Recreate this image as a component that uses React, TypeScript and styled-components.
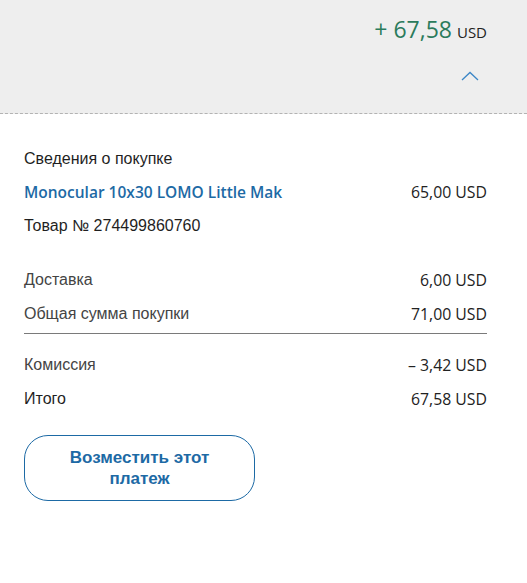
import React from "react"
import styled, { createGlobalStyle } from "styled-components"

const GlobalStyle = createGlobalStyle`
  html, body {
    margin: 0;
    padding: 0;
    background: #ffffff;
  }
`

const Page = styled.div`
  width: 527px;
  height: 583px;
  background: #ffffff;
  font-family: "Liberation Sans", Arial, sans-serif;
  color: #1f1f1f;
`

const Header = styled.div`
  height: 114px;
  background: #eeeeee;
  border-bottom: 1px dashed #b3b3b3;
  box-sizing: border-box;
  padding: 13px 40px 0 24px;
  display: flex;
  flex-direction: column;
  align-items: flex-end;
`

const Total = styled.div`
  display: flex;
  align-items: baseline;
  gap: 5px;
  font-family: "Open Sans", sans-serif;
`

const TotalValue = styled.span`
  font-size: 23px;
  color: #2b7b5c;
`

const Currency = styled.span`
  font-size: 15px;
  color: #222;
`

const Toggle = styled.button`
  margin-top: 26px;
  margin-right: 6px;
  width: 20px;
  height: 14px;
  padding: 0;
  border: none;
  background: none;
  display: flex;
`

const Body = styled.div`
  padding: 36px 40px 0 24px;
  display: flex;
  flex-direction: column;
`

const Title = styled.div`
  font-size: 16px;
  line-height: 32px;
  height: 32px;
  margin-top: -7px;
`

const Row = styled.div<{ $mt?: number }>`
  display: flex;
  justify-content: space-between;
  align-items: center;
  height: 34px;
  margin-top: ${p => p.$mt ?? 0}px;
`

const Label = styled.span<{ $muted?: boolean }>`
  font-size: 16px;
  color: ${p => (p.$muted ? "#444" : "#1f1f1f")};
`

const Product = styled.span`
  font-family: "Open Sans", sans-serif;
  font-weight: 600;
  font-size: 15.5px;
  color: #1d6aa5;
`

const Amount = styled.span`
  font-family: "Open Sans", sans-serif;
  font-size: 15.8px;
  color: #222;
`

const Divider = styled.div`
  height: 1px;
  background: #7a7a7a;
  margin: 2px 0 14px;
`

const RefundButton = styled.button`
  margin-top: 19px;
  width: 231px;
  height: 66px;
  border: 1px solid #1d6aa5;
  border-radius: 24px;
  background: #fff;
  color: #1d6aa5;
  font-family: "Liberation Sans", Arial, sans-serif;
  font-weight: 700;
  font-size: 17px;
  line-height: 21px;
  padding: 0 30px;
  cursor: pointer;
`

export default function App() {
  return (
    <Page>
      <GlobalStyle />
      <Header>
        <Total>
          <TotalValue>+ 67,58</TotalValue>
          <Currency>USD</Currency>
        </Total>
        <Toggle aria-label="Свернуть">
          <svg width="18" height="10" viewBox="0 0 18 10" fill="none">
            <path d="M1 9L9 1.5L17 9" stroke="#3b86c6" strokeWidth="1.3" />
          </svg>
        </Toggle>
      </Header>
      <Body>
        <Title>Сведения о покупке</Title>
        <Row>
          <Product>Monocular 10x30 LOMO Little Mak</Product>
          <Amount>65,00 USD</Amount>
        </Row>
        <Row>
          <Label>Товар № 274499860760</Label>
        </Row>
        <Row $mt={20}>
          <Label $muted>Доставка</Label>
          <Amount>6,00 USD</Amount>
        </Row>
        <Row>
          <Label $muted>Общая сумма покупки</Label>
          <Amount>71,00 USD</Amount>
        </Row>
        <Divider />
        <Row>
          <Label $muted>Комиссия</Label>
          <Amount>– 3,42 USD</Amount>
        </Row>
        <Row>
          <Label>Итого</Label>
          <Amount>67,58 USD</Amount>
        </Row>
        <div>
          <RefundButton>Возместить этот платеж</RefundButton>
        </div>
      </Body>
    </Page>
  )
}
